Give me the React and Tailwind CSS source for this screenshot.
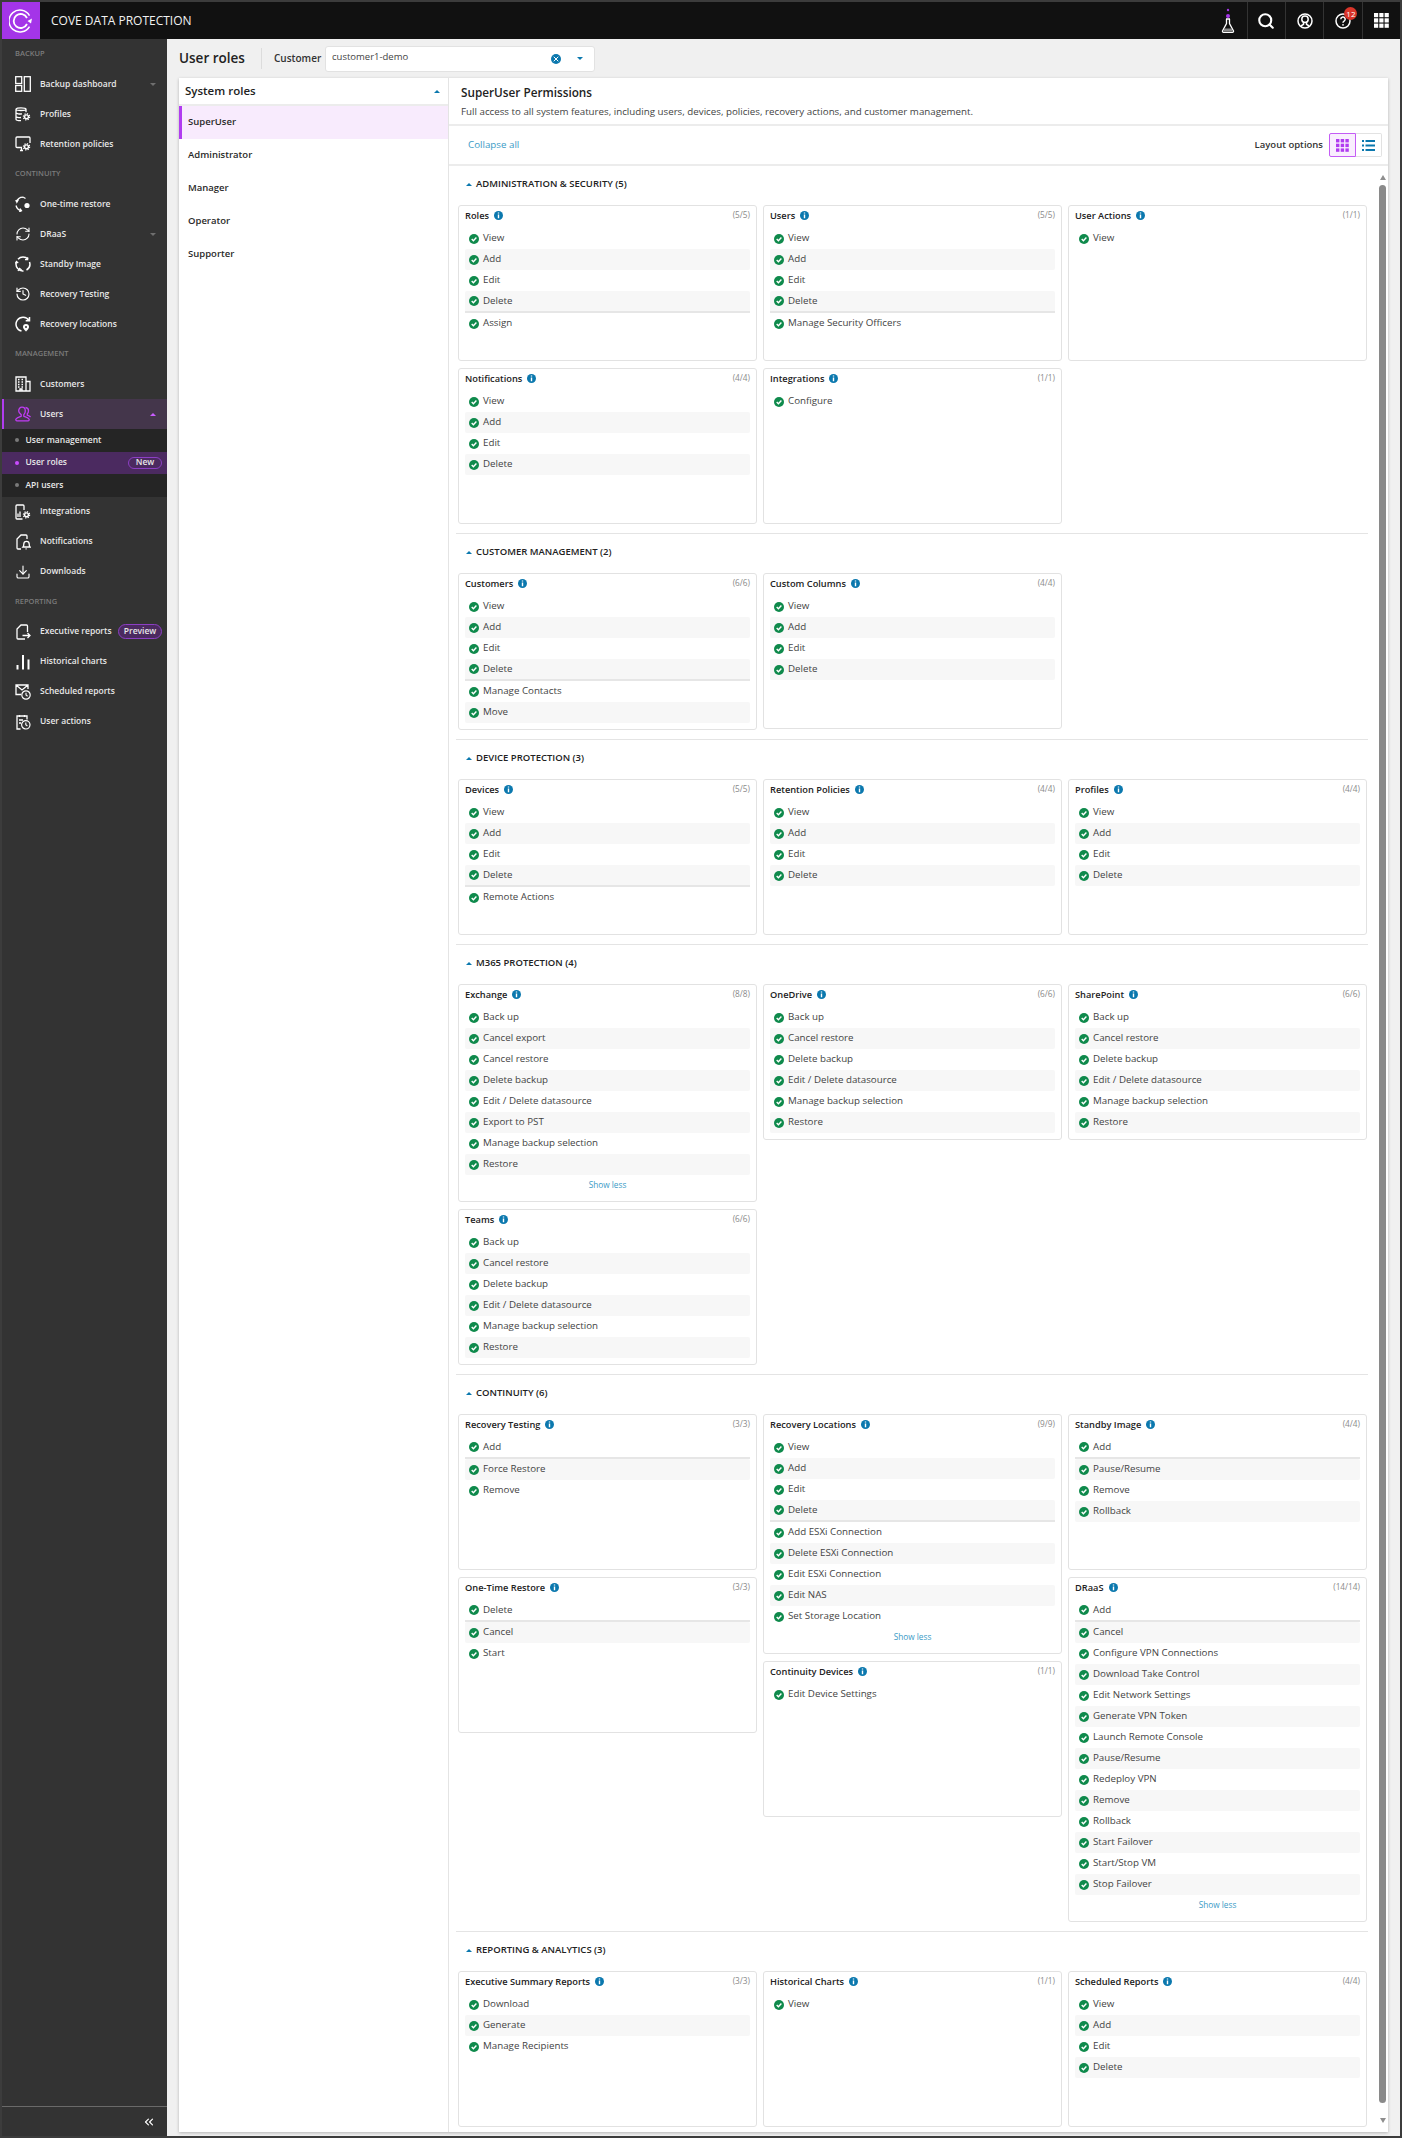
import { ChevronsLeft, Download, History, RefreshCw, Search, X } from 'lucide-react';

// ── Sidebar icons ───────────────────────────────────────────────────────
function Gear({ x, y }) {
  return (
    <g>
      <circle cx={x} cy={y} r="4" fill="#333" stroke="none" />
      <circle cx={x} cy={y} r="3.1" fill="none" stroke="#fff" strokeWidth="1.3" strokeDasharray="1.2 1.23" />
      <circle cx={x} cy={y} r="1.9" fill="none" stroke="#fff" strokeWidth="1.4" />
    </g>
  );
}

function Clock({ x, y }) {
  return (
    <g>
      <circle cx={x} cy={y} r="4.2" fill="#333" stroke="#fff" strokeWidth="1.2" />
      <path d={`M${x} ${y - 2.2}V${y}l1.6 1.2`} fill="none" stroke="#fff" strokeWidth="1.1" />
    </g>
  );
}

function Ico({ children, color = '#fff' }) {
  return (
    <svg width="16" height="16" viewBox="0 0 16 16" fill="none" stroke={color} strokeWidth="1.3" className="shrink-0">
      {children}
    </svg>
  );
}

const icons = {
  dashboard: (
    <Ico>
      <rect x="0.7" y="0.7" width="6" height="6.8" />
      <rect x="0.7" y="9.5" width="6" height="5.8" />
      <rect x="9.3" y="0.7" width="6" height="14.6" />
    </Ico>
  ),
  profiles: (
    <Ico>
      <path d="M1 3.2C1 1.5 11 1.5 11 3.2v3M1 3.2v10c0 1 2.500 1.500 5 1.500M1 3.200c0 1.700 10 1.700 10 0M1 6.600c0 1.300 4 1.600 6 1.300M1 10.300c0 1 3 1.400 5 1.200" />
      <Gear x={11.500} y={10.800} />
    </Ico>
  ),
  retention: (
    <Ico>
      <path d="M7 11.500H2a1 1 0 0 1-1-1V2a1 1 0 0 1 1-1h12a1 1 0 0 1 1 1v5M5 14.500h3M6.500 11.500v3" />
      <Gear x={11.500} y={10.800} />
    </Ico>
  ),
  restore: (
    <Ico>
      <path d="M8 1.200a6.800 6.800 0 0 0-6.500 5M1 9.500a7 7 0 0 0 5.500 5.300M8 1l2.500 1.500M3.500 3.500L1.800 6.400 0.800 4M5 12.500l1.500 2.300-2.300 1" />
      <circle cx="12" cy="9.500" r="2.600" fill="#fff" stroke="none" />
    </Ico>
  ),
  draas: <RefreshCw size={16} color="#fff" strokeWidth={1.6} className="shrink-0" />,
  standby: (
    <Ico>
      <path d="M3 3.200A6.800 6.800 0 0 1 13 3.200M14.500 6a6.800 6.800 0 0 1-3 8M8.500 14.900A6.800 6.800 0 0 1 1.400 6" strokeWidth="1.500" />
      <path d="M12.600 1.200v2.500H10M3 15l1.600-2.600 2 1.600M0.500 7.500l1-2 1.700 1.500" />
    </Ico>
  ),
  testing: <History size={16} color="#fff" strokeWidth={1.7} className="shrink-0" />,
  locations: (
    <Ico>
      <path d="M14 4.500A7 7 0 1 0 6.500 15M14.500 1v3.800h-3.800" strokeWidth="1.500" />
      <path d="M11 8a3 3 0 0 1 3 3c0 1.800-3 4.500-3 4.500S8 12.800 8 11a3 3 0 0 1 3-3z" fill="#fff" stroke="none" />
      <circle cx="11" cy="11" r="1" fill="#333" stroke="none" />
    </Ico>
  ),
  customers: (
    <Ico>
      <path d="M1 15V1h10v14zM11 5.500h4V15h-4" />
      <path d="M3 3.500h1.500M6.500 3.500H8M3 6h1.500M6.500 6H8M3 8.500h1.500M6.500 8.500H8M3 11h1.500M6.500 11H8M5 15v-2h2v2" strokeWidth="1.400" />
    </Ico>
  ),
  users: (
    <Ico color="#c03cf5">
      <path d="M7 1.200c2 0 3.300 1.600 3.300 3.700 0 1.700-.7 3-1.500 3.800v1.500c2 .7 4.500 1.500 5.200 2.800.4.800 0 1.800-1 1.800H2c-1 0-1.400-1-1-1.800.7-1.300 3.200-2.100 5.200-2.800V8.700C5.400 7.900 3.700 6.600 3.700 4.900 3.700 2.800 5 1.200 7 1.200z" />
      <path d="M10.500 1.500c2 .2 3 1.700 3 3.300 0 1.300-.5 2.300-1.200 3v1.400c1.300.5 2.500 1 3.200 1.800" />
    </Ico>
  ),
  integrations: (
    <Ico>
      <path d="M7.500 15H2a1 1 0 0 1-1-1V2a1 1 0 0 1 1-1h6a1 1 0 0 1 1 1v4M3 13V9.500M5 13V7.500" />
      <Gear x={11.500} y={10.800} />
    </Ico>
  ),
  notifications: (
    <Ico>
      <path d="M6 15H3a1 1 0 0 1-1-1V5l4-4h5a1 1 0 0 1 1 1v3" />
      <path d="M8 13c.8-.8.8-2 .8-3a2.700 2.700 0 0 1 5.400 0c0 1 0 2.200.8 3zM10.500 14.800h1.200" />
    </Ico>
  ),
  downloads: <Download size={16} color="#fff" strokeWidth={1.7} className="shrink-0" />,
  executive: (
    <Ico>
      <path d="M12.500 8V2a1 1 0 0 0-1-1H6L2 5v9a1 1 0 0 0 1 1h7" />
      <path d="M7.500 11.500h7.500M12.500 9l2.500 2.500-2.500 2.500" />
    </Ico>
  ),
  charts: (
    <Ico>
      <path d="M2.500 11v4.500M8 1v14.500M13.500 5.500v10" strokeWidth="2" />
    </Ico>
  ),
  scheduled: (
    <Ico>
      <path d="M6 10.500H1V1h12v4M1 1l6 5 6-5" />
      <Clock x={11} y={11} />
    </Ico>
  ),
  actions: (
    <Ico>
      <path d="M5.500 15H2V2h10v3.500M4.500 1v2M9.500 1v2M4 6h4M4 9h2" />
      <Clock x={10.800} y={10.800} />
    </Ico>
  ),
};

// ── Sidebar ─────────────────────────────────────────────────────────────
function NavLabel({ children }) {
  return (
    <div className="h-[30px] flex items-center pl-[13px] text-[7.5px] font-semibold uppercase text-[#7c7c7c]">
      {children}
    </div>
  );
}

function NavItem({ icon, label, caret, active, badge }) {
  return (
    <div className={`h-[30px] flex items-center text-[8.5px] font-semibold text-[#e8e8e8] ${active ? 'bg-[#44364b] border-l-2 border-[#b13cf0] pl-[11px]' : 'pl-[13px]'}`}>
      {icons[icon]}
      <span className="ml-[9px] whitespace-nowrap">{label}</span>
      {caret === 'down' && <span className="ml-auto mr-[11px] border-x-[3.5px] border-x-transparent border-t-[3.5px] border-t-[#6f6f6f]" />}
      {caret === 'up' && <span className="ml-auto mr-[11px] border-x-[3.5px] border-x-transparent border-b-[3.5px] border-b-[#c95cff]" />}
      {badge && (
        <span className="ml-auto mr-[5px] w-[44px] h-[15px] flex items-center justify-center rounded-full border border-[#8c3fc4] bg-[#4b2a60]">
          {badge}
        </span>
      )}
    </div>
  );
}

function SubItem({ label, active, badge }) {
  return (
    <div className={`h-[22.5px] flex items-center pl-[13px] text-[8.5px] font-semibold text-[#e8e8e8] ${active ? 'bg-[#4b2a60]' : 'bg-[#252525]'}`}>
      <span className={`w-[4px] h-[4px] rounded-full ${active ? 'bg-[#c94cff]' : 'bg-[#7a7a7a]'}`} />
      <span className="ml-[6.500px]">{label}</span>
      {badge && (
        <span className="ml-auto mr-[5px] w-[34px] h-[12px] flex items-center justify-center rounded-full border border-[#8c3fc4]">
          {badge}
        </span>
      )}
    </div>
  );
}

function Sidebar() {
  return (
    <aside className="w-[165px] shrink-0 bg-[#333333] flex flex-col">
      <NavLabel>Backup</NavLabel>
      <NavItem icon="dashboard" label="Backup dashboard" caret="down" />
      <NavItem icon="profiles" label="Profiles" />
      <NavItem icon="retention" label="Retention policies" />
      <NavLabel>Continuity</NavLabel>
      <NavItem icon="restore" label="One-time restore" />
      <NavItem icon="draas" label="DRaaS" caret="down" />
      <NavItem icon="standby" label="Standby Image" />
      <NavItem icon="testing" label="Recovery Testing" />
      <NavItem icon="locations" label="Recovery locations" />
      <NavLabel>Management</NavLabel>
      <NavItem icon="customers" label="Customers" />
      <NavItem icon="users" label="Users" caret="up" active />
      <SubItem label="User management" />
      <SubItem label="User roles" active badge="New" />
      <SubItem label="API users" />
      <NavItem icon="integrations" label="Integrations" />
      <NavItem icon="notifications" label="Notifications" />
      <NavItem icon="downloads" label="Downloads" />
      <NavLabel>Reporting</NavLabel>
      <NavItem icon="executive" label="Executive reports" badge="Preview" />
      <NavItem icon="charts" label="Historical charts" />
      <NavItem icon="scheduled" label="Scheduled reports" />
      <NavItem icon="actions" label="User actions" />
      <div className="mt-auto h-[30px] border-t border-[#6a6a6a] flex items-center justify-end pr-[11px]">
        <ChevronsLeft size={14} color="#fff" strokeWidth={2} />
      </div>
    </aside>
  );
}

// ── Top bar ─────────────────────────────────────────────────────────────
function TopBar() {
  return (
    <header className="h-[37px] shrink-0 bg-[#111111] flex items-center">
      <div className="w-[38px] h-full bg-[#a435e8] flex items-center justify-center">
        <svg width="24" height="24" viewBox="0 0 24 24" fill="none" stroke="#fff">
          <path d="M20.500 6.500A11 11 0 1 0 20.500 17.500" strokeWidth="1.500" />
          <path d="M18 9a7 7 0 1 0 0 6" strokeWidth="1.800" />
          <path d="M23 9.500l-1 5-3.500-2.500z" fill="#fff" stroke="none" />
        </svg>
      </div>
      <span className="ml-[11px] text-[12px] text-[#f2f2f2] whitespace-nowrap">COVE DATA PROTECTION</span>
      <div className="ml-auto flex items-center h-full">
        <svg width="14" height="26" viewBox="0 0 14 26" fill="none" stroke="#fff" strokeWidth="1.300" className="mr-[12px]">
          <circle cx="7" cy="2" r="1.200" fill="#a435e8" stroke="none" />
          <circle cx="7" cy="8" r="2" fill="#a435e8" stroke="none" />
          <path d="M5 11h4M5.500 11v4.500L1.500 23a1 1 0 0 0 1 1.300h9a1 1 0 0 0 1-1.300l-4-7.500V11" />
          <path d="M3.500 20.500h7l1.500 3H2z" fill="#8a8a8a" stroke="none" />
        </svg>
        <div className="w-[38.300px] h-full border-l border-[#333] flex items-center justify-center">
          <Search size={18} color="#fff" strokeWidth={2.800} />
        </div>
        <div className="w-[38.300px] h-full border-l border-[#333] flex items-center justify-center">
          <svg width="16" height="16" viewBox="0 0 16 16" fill="none" stroke="#fff" strokeWidth="1.500">
            <circle cx="8" cy="8" r="7" />
            <circle cx="8" cy="6.200" r="3.200" />
            <path d="M6.500 9v2.300L3.800 13M9.500 9v2.300l2.700 1.700" />
          </svg>
        </div>
        <div className="relative w-[38.300px] h-full border-l border-[#333] flex items-center justify-center">
          <svg width="16" height="16" viewBox="0 0 16 16" fill="none" stroke="#fff" strokeWidth="1.500">
            <circle cx="8" cy="8" r="7" />
            <path d="M5.800 6.200a2.200 2.200 0 1 1 3.300 1.900c-.7.400-1.100.8-1.100 1.700" />
            <circle cx="8" cy="11.800" r="0.900" fill="#fff" stroke="none" />
          </svg>
          <span className="absolute left-[20px] top-[5px] w-[13px] h-[13px] rounded-full bg-[#d9352a] text-white text-[8px] leading-[13px] text-center">12</span>
        </div>
        <div className="w-[38.300px] h-full border-l border-[#333] flex items-center justify-center">
          <svg width="15" height="15" viewBox="0 0 15 15" fill="#fff">
            {[0, 5.300, 10.600].map(y => [0, 5.300, 10.600].map(x => (
              <rect key={`${x}-${y}`} x={x} y={y} width="4.200" height="4.200" />
            )))}
          </svg>
        </div>
      </div>
    </header>
  );
}

// ── Permission data ─────────────────────────────────────────────────────
const CRUD = ['View', 'Add', 'Edit', 'Delete'];
const TEAMS = ['Back up', 'Cancel restore', 'Delete backup', 'Edit / Delete datasource', 'Manage backup selection', 'Restore'];

const sections = [
  {
    title: 'ADMINISTRATION & SECURITY (5)',
    columns: [
      [
        { name: 'Roles', count: '5/5', rows: [...CRUD, 'Assign'], sep: 3 },
        { name: 'Notifications', count: '4/4', rows: CRUD },
      ],
      [
        { name: 'Users', count: '5/5', rows: [...CRUD, 'Manage Security Officers'], sep: 3 },
        { name: 'Integrations', count: '1/1', rows: ['Configure'] },
      ],
      [{ name: 'User Actions', count: '1/1', rows: ['View'] }],
    ],
  },
  {
    title: 'CUSTOMER MANAGEMENT (2)',
    columns: [
      [{ name: 'Customers', count: '6/6', rows: [...CRUD, 'Manage Contacts', 'Move'], sep: 3 }],
      [{ name: 'Custom Columns', count: '4/4', rows: CRUD }],
      [],
    ],
  },
  {
    title: 'DEVICE PROTECTION (3)',
    columns: [
      [{ name: 'Devices', count: '5/5', rows: [...CRUD, 'Remote Actions'], sep: 3 }],
      [{ name: 'Retention Policies', count: '4/4', rows: CRUD }],
      [{ name: 'Profiles', count: '4/4', rows: CRUD }],
    ],
  },
  {
    title: 'M365 PROTECTION (4)',
    columns: [
      [
        {
          name: 'Exchange', count: '8/8', more: true,
          rows: ['Back up', 'Cancel export', 'Cancel restore', 'Delete backup', 'Edit / Delete datasource', 'Export to PST', 'Manage backup selection', 'Restore'],
        },
        { name: 'Teams', count: '6/6', rows: TEAMS },
      ],
      [{ name: 'OneDrive', count: '6/6', rows: TEAMS }],
      [{ name: 'SharePoint', count: '6/6', rows: TEAMS }],
    ],
  },
  {
    title: 'CONTINUITY (6)',
    columns: [
      [
        { name: 'Recovery Testing', count: '3/3', rows: ['Add', 'Force Restore', 'Remove'], sep: 0 },
        { name: 'One-Time Restore', count: '3/3', rows: ['Delete', 'Cancel', 'Start'], sep: 0 },
      ],
      [
        {
          name: 'Recovery Locations', count: '9/9', more: true, sep: 3,
          rows: [...CRUD, 'Add ESXi Connection', 'Delete ESXi Connection', 'Edit ESXi Connection', 'Edit NAS', 'Set Storage Location'],
        },
        { name: 'Continuity Devices', count: '1/1', rows: ['Edit Device Settings'] },
      ],
      [
        { name: 'Standby Image', count: '4/4', rows: ['Add', 'Pause/Resume', 'Remove', 'Rollback'], sep: 0 },
        {
          name: 'DRaaS', count: '14/14', more: true, sep: 0,
          rows: ['Add', 'Cancel', 'Configure VPN Connections', 'Download Take Control', 'Edit Network Settings', 'Generate VPN Token', 'Launch Remote Console', 'Pause/Resume', 'Redeploy VPN', 'Remove', 'Rollback', 'Start Failover', 'Start/Stop VM', 'Stop Failover'],
        },
      ],
    ],
  },
  {
    title: 'REPORTING & ANALYTICS (3)',
    columns: [
      [{ name: 'Executive Summary Reports', count: '3/3', rows: ['Download', 'Generate', 'Manage Recipients'] }],
      [{ name: 'Historical Charts', count: '1/1', rows: ['View'] }],
      [{ name: 'Scheduled Reports', count: '4/4', rows: CRUD }],
    ],
  },
];

// ── Permission cards ────────────────────────────────────────────────────
function InfoDot() {
  return (
    <svg width="9" height="9" viewBox="0 0 9 9" className="shrink-0">
      <circle cx="4.500" cy="4.500" r="4.500" fill="#0b78ae" />
      <path d="M4.500 1.600v.9M4.500 3.500v3.800" stroke="#fff" strokeWidth="1.400" />
    </svg>
  );
}

function CheckDot() {
  return (
    <svg width="10" height="10" viewBox="0 0 10 10" className="shrink-0">
      <circle cx="5" cy="5" r="5" fill="#0f8a4c" />
      <path d="M2.700 5.100l1.700 1.700 3-3.200" fill="none" stroke="#fff" strokeWidth="1.400" />
    </svg>
  );
}

function PermissionCard({ name, count, rows, sep, more }) {
  return (
    <div className={`min-h-[156px] bg-white border border-[#e2e2e2] rounded-[3px] px-[6px] ${more ? '' : 'pb-[6px]'}`}>
      <div className="h-[22px] pb-[3px] flex items-center gap-[5px]">
        <span className="text-[9.25px] font-semibold text-[#222] whitespace-nowrap">{name}</span>
        <InfoDot />
        <span className="ml-auto text-[8.25px] text-[#8a8a8a]">({count})</span>
      </div>
      {rows.map((row, i) => (
        <div
          key={row}
          className={`flex items-center gap-[4px] pl-[4px] text-[9.75px] text-[#444] rounded-[2px] ${i % 2 === 1 ? 'bg-[#f7f7f7]' : ''} ${i === sep ? 'h-[22px] border-b-2 border-[#e6e6e6] rounded-b-none' : 'h-[21px]'}`}
        >
          <CheckDot />
          <span className="whitespace-nowrap">{row}</span>
        </div>
      ))}
      {more && (
        <div className="h-[26px] pb-[5px] flex items-center justify-center text-[8.25px] text-[#3b9bc6]">Show less</div>
      )}
    </div>
  );
}

function Section({ title, columns, last }) {
  return (
    <section className={`pb-[9px] ${last ? '' : 'border-b border-[#e4e4e4]'}`}>
      <div className="h-[39px] pb-[3px] pl-[10px] flex items-center gap-[4px] text-[9.5px] font-semibold text-[#222]">
        <span className="border-x-[3px] border-x-transparent border-b-[3.500px] border-b-[#0b78ae]" />
        {title}
      </div>
      <div className="grid grid-cols-3 gap-x-[6px] pl-[2px] pr-[1px]">
        {columns.map((cards, i) => (
          <div key={i} className="flex flex-col gap-[7px]">
            {cards.map(card => <PermissionCard key={card.name} {...card} />)}
          </div>
        ))}
      </div>
    </section>
  );
}

// ── Page ────────────────────────────────────────────────────────────────
function RolesList() {
  const roles = ['SuperUser', 'Administrator', 'Manager', 'Operator', 'Supporter'];
  return (
    <div className="w-[270px] shrink-0 border-r border-[#e4e4e4]">
      <div className="h-[28px] box-border border-b-2 border-[#ececec] pl-[6px] pr-[8px] flex items-center justify-between text-[11.5px] font-semibold text-[#222]">
        System roles
        <span className="border-x-[3px] border-x-transparent border-b-[3.500px] border-b-[#0b78ae]" />
      </div>
      {roles.map((role, i) => (
        <div
          key={role}
          className={`h-[33px] flex items-center text-[9.5px] font-semibold text-[#2a2a2a] ${i === 0 ? 'bg-[#f8ebfd] border-l-[3px] border-[#b13cf0] pl-[6px]' : 'pl-[9px]'}`}
        >
          {role}
        </div>
      ))}
    </div>
  );
}

function LayoutToggle() {
  return (
    <div className="flex items-center">
      <span className="mr-[6px] text-[9.5px] font-semibold text-[#333]">Layout options</span>
      <div className="w-[27px] h-[24px] bg-[#f9eefe] border border-[#c45cf5] rounded-l-[2px] flex items-center justify-center">
        <svg width="13" height="13" viewBox="0 0 13 13" fill="#b13cf0">
          {[0, 4.700, 9.400].map(y => [0, 4.700, 9.400].map(x => (
            <rect key={`${x}-${y}`} x={x} y={y} width="3.400" height="3.400" />
          )))}
        </svg>
      </div>
      <div className="w-[26px] h-[24px] bg-white border border-l-0 border-[#e2e2e2] rounded-r-[2px] flex items-center justify-center">
        <svg width="13" height="11" viewBox="0 0 13 11" fill="#0b78ae">
          <rect x="0" y="0" width="2" height="2" /><rect x="3.500" y="0" width="9.500" height="2" />
          <rect x="0" y="4.500" width="2" height="2" /><rect x="3.500" y="4.500" width="9.500" height="2" />
          <rect x="0" y="9" width="2" height="2" /><rect x="3.500" y="9" width="9.500" height="2" />
        </svg>
      </div>
    </div>
  );
}

function ScrollRail() {
  return (
    <div className="w-[7px] ml-[11px] mr-[2px] shrink-0 flex flex-col items-center pt-[9px] pb-[9px]">
      <span className="border-x-[3.500px] border-x-transparent border-b-[5px] border-b-[#8e8e8e]" />
      <div className="w-full flex-1 mt-[5px] mb-[15px] rounded-full bg-[#8a8a8a]" />
      <span className="border-x-[3.500px] border-x-transparent border-t-[5px] border-t-[#8e8e8e]" />
    </div>
  );
}

export default function App() {
  return (
    <div className="w-[1402px] h-[2138px] bg-[#3c3c3c] p-[2px] flex flex-col [font-family:'Open_Sans',sans-serif]">
      <TopBar />
      <div className="flex-1 flex min-h-0">
        <Sidebar />
        <main className="flex-1 min-w-0 bg-[#f0f0f0] flex flex-col pl-[12px] pr-[12px] pb-[4px]">
          <div className="h-[39px] shrink-0 flex items-center">
            <h1 className="w-[64px] text-[13.5px] font-semibold text-[#222] whitespace-nowrap">User roles</h1>
            <span className="ml-[18px] w-px h-[21px] bg-[#dcdcdc]" />
            <span className="ml-[12px] w-[44px] text-[10px] font-semibold text-[#333]">Customer</span>
            <div className="ml-[7px] w-[270px] h-[26px] bg-white border border-[#e2e2e2] rounded-[3px] flex items-center pl-[6px] pr-[11px] text-[9.5px] text-[#444]">
              <span className="-mt-[2px]">customer1-demo</span>
              <span className="ml-auto w-[10px] h-[10px] rounded-full bg-[#0b78ae] flex items-center justify-center">
                <X size={8} color="#fff" strokeWidth={3} />
              </span>
              <span className="ml-[16px] border-x-[3px] border-x-transparent border-t-[3.500px] border-t-[#0b78ae]" />
            </div>
          </div>
          <div className="flex-1 min-h-0 bg-white shadow-[0_1px_3px_rgba(0,0,0,0.25)] flex">
            <RolesList />
            <div className="flex-1 min-w-0 flex flex-col">
              <div className="h-[48px] shrink-0 box-border border-b-2 border-[#ececec] pl-[12px] pt-[5px]">
                <h2 className="text-[11.75px] leading-[18px] font-semibold text-[#222]">SuperUser Permissions</h2>
                <p className="mt-[4px] text-[9.75px] leading-[14px] text-[#444]">
                  Full access to all system features, including users, devices, policies, recovery actions, and customer management.
                </p>
              </div>
              <div className="h-[40px] shrink-0 box-border border-b-2 border-[#ececec] pl-[19px] pr-[6px] flex items-center justify-between">
                <span className="text-[9.75px] text-[#3b9bc6]">Collapse all</span>
                <LayoutToggle />
              </div>
              <div className="flex-1 min-h-0 flex">
                <div className="flex-1 min-w-0 pl-[7px]">
                  {sections.map((section, i) => (
                    <Section key={section.title} {...section} last={i === sections.length - 1} />
                  ))}
                </div>
                <ScrollRail />
              </div>
            </div>
          </div>
        </main>
      </div>
    </div>
  );
}
